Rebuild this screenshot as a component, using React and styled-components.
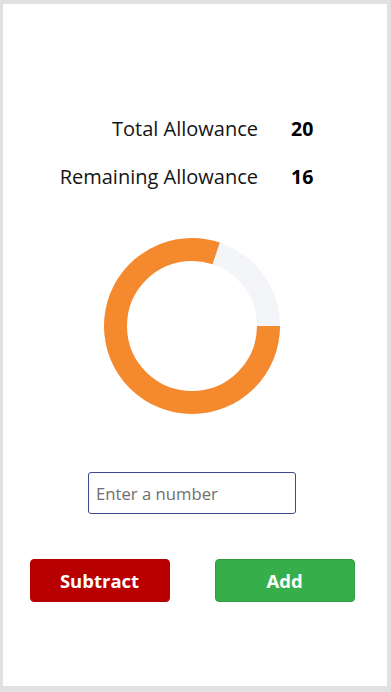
import React, { useState } from 'react';
import styled, { createGlobalStyle } from 'styled-components';

const GlobalStyle = createGlobalStyle`
  html, body {
    margin: 0;
    padding: 0;
    background: #e1e1e1;
  }
  body {
    font-family: "Open Sans", "Liberation Sans", sans-serif;
    color: #111;
  }
`;

const Frame = styled.div`
  margin: 4px 4px 6px 3px;
  height: 682px;
  background: #fff;
  box-sizing: border-box;
  padding: 101px 6px 0 0;
  display: flex;
  flex-direction: column;
  align-items: center;
`;

const Stats = styled.div`
  align-self: stretch;
  display: grid;
  grid-template-columns: 255px auto;
  column-gap: 33px;
`;

const Label = styled.div`
  text-align: right;
  font-size: 20px;
  line-height: 48px;
  color: #141414;
`;

const Value = styled.div`
  font-size: 19.5px;
  line-height: 48px;
  font-weight: 700;
  color: #000;
`;

const Donut = styled.svg`
  display: block;
  margin-top: 37px;
  width: 176px;
  height: 176px;
`;

const NumberInput = styled.input`
  margin-top: 58px;
  width: 208px;
  height: 42px;
  box-sizing: border-box;
  border: 1px solid #3b4a8e;
  border-radius: 3px;
  padding: 0 7px;
  font-family: inherit;
  font-size: 16.7px;
  color: #222;
  outline: none;
  &::placeholder {
    color: #6f6f6f;
  }
`;

const Buttons = styled.div`
  margin-top: 45px;
  display: flex;
  gap: 45px;
`;

const Button = styled.button`
  width: 140px;
  height: 43px;
  border-radius: 4px;
  border: 1px solid ${p => p.$border};
  background: ${p => p.$bg};
  color: #fff;
  font-family: inherit;
  font-size: 18.5px;
  font-weight: 700;
  cursor: pointer;
`;

const R = 76.5;
const C = 2 * Math.PI * R;

export default function App() {
  const [total] = useState(20);
  const [remaining] = useState(16);
  const used = remaining / total;

  return (
    <>
      <GlobalStyle />
      <Frame>
        <Stats>
          <Label>Total Allowance</Label>
          <Value>{total}</Value>
          <Label>Remaining Allowance</Label>
          <Value>{remaining}</Value>
        </Stats>
        <Donut viewBox="0 0 176 176">
          <circle cx="88" cy="88" r={R} fill="none" stroke="#f4f5f9" strokeWidth="23" />
          <circle
            cx="88"
            cy="88"
            r={R}
            fill="none"
            stroke="#f5892e"
            strokeWidth="23"
            strokeDasharray={`${C * used} ${C}`}
          />
        </Donut>
        <NumberInput type="text" placeholder="Enter a number" />
        <Buttons>
          <Button $bg="#b80000" $border="#b10000">Subtract</Button>
          <Button $bg="#36af4b" $border="#2f9c42">Add</Button>
        </Buttons>
      </Frame>
    </>
  );
}
